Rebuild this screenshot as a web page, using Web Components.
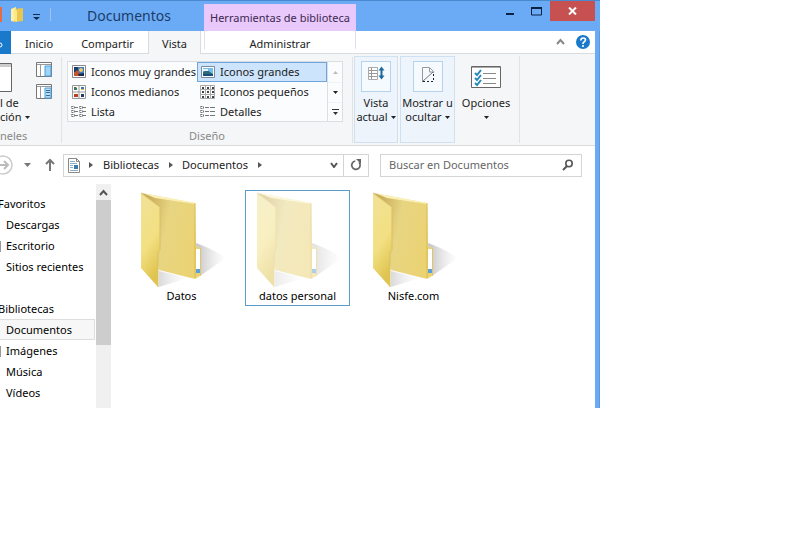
<!DOCTYPE html>
<html lang="es">
<head>
<meta charset="utf-8">
<title>Documentos</title>
<style>
body{margin:0;background:#fff;font:11px/16px "Noto Sans","Open Sans",sans-serif;color:#222;overflow-x:hidden}
main{padding-right:206px}
</style>
</head>
<body>
<main><explorer-window></explorer-window></main>
<script>
const base=`<style>
*{box-sizing:border-box}
button{font:inherit;color:inherit;background:none;border:0;padding:0;margin:0;cursor:default}
a{color:inherit;text-decoration:none}
svg{display:block;flex:none}
</style>`;
const define=(name,html)=>customElements.define(name,class extends HTMLElement{
  constructor(){super();this.attachShadow({mode:'open'}).innerHTML=base+(typeof html==='function'?html(this):html);}
});

const icons={
xl:`<svg width="16" height="16"><path d="M1.5 1.500h13v12h-13z" fill="#fff" stroke="#888"/><path d="M3 3h10v9H3z" fill="#3b7fc0"/><path d="M3 3h4v5H3z" fill="#173a6a"/><path d="M3 9l3-3 4 5 1 1H3z" fill="#c8542a"/><circle cx="10" cy="6" r="2" fill="#f3c75a"/><path d="M7 10l6-1v3H8z" fill="#182c50"/></svg>`,
lg:`<svg width="16" height="16"><path d="M1.500 2.500h13v11h-13z" fill="#fff" stroke="#7a8ba0"/><path d="M3 4h10v8H3z" fill="#79bce8"/><path d="M3 8l4-2 6 4v2H3z" fill="#2c6c78"/><path d="M3 5h5v2H3z" fill="#e3f3fb"/><path d="M3 10h10v2H3z" fill="#1b4e7d"/></svg>`,
md:`<svg width="16" height="16"><path d="M1.500 1.500h13v13h-13zM8 1v14M1 8h14" fill="#fff" stroke="#999"/><path d="M3 3h3v3H3z" fill="#377d60"/><path d="M10 3h3v3h-3z" fill="#367bb8"/><path d="M3 10h4v3H3z" fill="#b94020"/><path d="M10 10h3v3h-3z" fill="#243b68"/><path d="M5 3h1v1H5zM10 5h3v1h-3z" fill="#e9b14c"/></svg>`,
sm:`<svg width="16" height="16"><path d="M.5 1.500h14v13H.5zM5.500 1v14M10.500 1v14M0 5.500h15M0 10.500h15" fill="#fff" stroke="#aaa"/><path d="M2 3h2v2H2zM7 3h2v2H7zM12 3h2v2h-2zM2 7h2v2H2zM7 7h2v2H7zM12 7h2v2h-2zM2 12h2v2H2zM7 12h2v2H7zM12 12h2v2h-2z" fill="#444"/></svg>`,
list:`<svg width="16" height="16" fill="none" stroke="#777"><path d="M.5 2.500h3v2h-3zM.5 6.500h3v2h-3zM.5 10.500h3v2h-3zM8.500 2.500h3v2h-3zM8.500 6.500h3v2h-3zM8.500 10.500h3v2h-3z" stroke-dasharray="2 1"/><path d="M4 3.500h3M4 7.500h3M4 11.500h3M12 3.500h3M12 7.500h3M12 11.500h3"/></svg>`,
det:`<svg width="16" height="16" fill="none" stroke="#777"><path d="M.5 2.500h3v2h-3zM.5 6.500h3v2h-3zM.5 10.500h3v2h-3z" stroke-dasharray="2 1"/><path d="M5 3.500h4M5 7.500h4M5 11.500h4M10 3.500h5M10 7.500h5M10 11.500h5"/></svg>`,
current:`<svg width="28" height="28" fill="none"><path d="M6.500 4.500h9v12h-9z" fill="#fff" stroke="#aaa"/><path d="M7 7.500h8M7 10.500h8M7 13.500h8M9.500 5v11" stroke="#999"/><path d="M19.500 6v9" stroke="#1c6a9c" stroke-width="2"/><path d="M16.500 7.500l3-4 3 4zM16.500 12.500l3 4 3-4z" fill="#1c6a9c"/></svg>`,
hide:`<svg width="28" height="28" fill="none" stroke="#555"><path d="M8.500 18V4.500h7l4 4V10M15.500 5v4h4" stroke="#999"/><path d="M8 19L19 9" stroke="#777"/><path d="M19.500 11v7.500H9" stroke="#222" stroke-dasharray="2 2"/></svg>`,
opts:`<svg width="32" height="24" fill="none"><path d="M1.500 1.500h29v21h-29z" fill="#fff" stroke="#666"/><path d="M2 2h28v1H2z" fill="#aaa"/><path d="M13 8.500h13M13 13.500h13M13 18.500h13" stroke="#888"/><path d="M5 8l2 2 4-5M5 13l2 2 4-5M5 18l2 2 4-5" stroke="#2489b8" stroke-width="2"/></svg>`
};
const caret='<svg width="5" height="3"><path d="M0 0h5L2.500 3z" fill="#222"/></svg>';

define('title-bar',`<style>
:host{display:grid;grid-template-columns:54px 150px 152px 1fr auto;height:31px;background:#6babf6;border-top:1px solid #4b89cf;color:#1c3c68}
.quick{display:flex;align-items:center;padding-bottom:2px}
h1{font-size:14px;font-weight:400;line-height:29px;margin:0;text-align:center}
.context{background:#e9c8fb;margin-top:3px;line-height:27px;text-align:center;color:#3b2850}
.controls{grid-column:5;display:flex;align-items:flex-start;padding-right:5px}
.controls button{width:27px;height:21px;display:grid;place-items:center}
.controls .close{width:45px;height:20px;background:#c75050}
</style>
<div class="quick"><svg width="54" height="24" fill="none"><path d="M-3 5h4v13h-4z" fill="#f5c7a6" stroke="#e56b42" stroke-width="2"/><path d="M11 6l5-2v15l-5-1z" fill="#fff1a0"/><path d="M14 6l9-1v13l-9 1z" fill="#e8c650"/><path d="M14 5l3 3v11l-3-2z" fill="#fbe98d"/><path d="M33 11.500h7" stroke="#122c50"/><path d="M33 14h7l-3.500 3z" fill="#122c50"/><path d="M50.500 5v13" stroke="#9fc3ec"/></svg></div>
<h1>Documentos</h1><div class="context">Herramientas de biblioteca</div>
<div class="controls"><button aria-label="Minimizar"><svg width="9" height="11"><path d="M1 7h8v2H1z" fill="#0e2344"/></svg></button><button aria-label="Maximizar"><svg width="11" height="9"><path d="M.5 1h10v7H.5z" fill="none" stroke="#0e2344"/><path d="M0 0h11v2H0z" fill="#0e2344"/></svg></button><button class="close" aria-label="Cerrar"><svg width="9" height="8"><path d="M1 .5l7 7M8 .5l-7 7" stroke="#fff" stroke-width="2"/></svg></button></div>`);

define('ribbon-tabs',`<style>
:host{display:flex;height:23px;background:#fff;border-bottom:1px solid #dadbdc}
nav{display:flex}
button{line-height:21px;height:23px;padding-top:2px;text-align:center}
.file{background:#1979ca;width:11px;color:#fff;overflow:hidden}
.active{background:#f5f6f7;border:1px solid #dadbdc;border-width:0 1px}
.context{border:1px solid #e6dcec;border-width:0 1px;margin-left:3px;height:18px}
.end{margin-left:auto;display:flex;align-items:center;gap:11px;padding-right:5px}
.end button{padding:0}
</style>
<nav><button class="file" aria-label="Archivo"><svg width="4" height="18"><circle cx="0" cy="10" r="2" fill="none" stroke="#fff"/></svg></button><button style="width:56px">Inicio</button><button style="width:81px">Compartir</button><button class="active" style="width:53px">Vista</button><button class="context" style="width:152px">Administrar</button></nav>
<div class="end"><button aria-label="Contraer"><svg width="9" height="22"><path d="M1 13l3.500-4L8 13" fill="none" stroke="#888" stroke-width="2"/></svg></button><button aria-label="Ayuda"><svg width="14" height="22"><g transform="translate(0 2)"><circle cx="7" cy="9" r="7" fill="#1979ca"/><path d="M4.800 7.500Q5 5 7.200 5q2.300 0 2.300 2 0 1-1.300 1.800Q7 9.500 7 11" fill="none" stroke="#fff" stroke-width="1.700"/><circle cx="7" cy="13" r="1.100" fill="#fff"/></g></svg></button></div>`);

define('ribbon-group',`<style>
:host{display:grid;grid-template-rows:1fr 14px;border-right:1px solid #e2e3e4;margin:3px 0 2px}
footer{text-align:center;color:#888;line-height:14px}
.content{display:flex}
</style><div class="content"><slot></slot></div><footer><slot name="label"></slot></footer>`);

define('gallery-option',e=>`<style>
:host{display:block}
button{display:flex;align-items:center;gap:4px;width:100%;height:20px;line-height:16px;padding:0 0 1px 2px;text-align:left;white-space:nowrap;border:1px solid transparent}
:host([selected]) button{background:#cce4fc;border-color:#6ea5dc}
</style><button>${icons[e.getAttribute('icon')]}<slot></slot></button>`);

define('view-gallery',`<style>
:host{display:flex;background:#fbfcfd;border:1px solid #dcdfe2;width:276px;height:61px;margin:4px 9px 0 5px}
.grid{display:grid;grid-template-columns:129px 130px;grid-auto-rows:20px;flex:none}
.scroll{display:grid;grid-template-rows:repeat(3,20px);flex:1;border-left:1px solid #dcdfe2}
.scroll button{display:grid;place-items:center}
.scroll button+button{border-top:1px solid #f1f2f3}
</style><div class="grid"><gallery-option icon="xl">Iconos muy grandes</gallery-option><gallery-option icon="lg" selected>Iconos grandes</gallery-option><gallery-option icon="md">Iconos medianos</gallery-option><gallery-option icon="sm">Iconos pequeños</gallery-option><gallery-option icon="list">Lista</gallery-option><gallery-option icon="det">Detalles</gallery-option></div>
<div class="scroll"><button aria-label="Subir"><svg width="5" height="3"><path d="M0 3h5L2.500 0z" fill="#bbb"/></svg></button><button aria-label="Bajar">${caret}</button><button aria-label="Más"><svg width="7" height="7"><path d="M0 0h7v1H0zM1 3h5L3.500 6z" fill="#333"/></svg></button></div>`);

define('ribbon-button',e=>`<style>
:host{display:block}
button{display:flex;flex-direction:column;align-items:center;width:100%;height:87px;border:1px solid transparent;padding-top:4px;line-height:14px;white-space:nowrap}
:host([active]) button{background:#edf4fb;border-color:#cfe1f1}
.icon{width:32px;height:31px;display:grid;place-items:center;margin-bottom:4px}
:host([active]) .icon{width:30px;border:1px solid #b5d3ec;background:#f5faff}
.last{display:flex;align-items:center;gap:3px;min-height:14px}
</style><button><span class="icon">${icons[e.getAttribute('icon')]}</span><span><slot></slot></span><span class="last"><slot name="second"></slot>${caret}</span></button>`);

define('panes-tools',`<style>
:host{display:flex;width:61px;height:69px;justify-content:space-between;padding:0 9px 0 0}
.main{width:31px;display:flex;flex-direction:column;align-items:flex-start;line-height:14px;white-space:nowrap}
.main svg.pane{margin:6px 0 4px}
.two{display:flex;align-items:center;gap:3px}
.side{display:grid;gap:7px;padding-top:5px;align-content:start}
</style><button class="main"><svg class="pane" width="12" height="29"><path d="M-2 .500h13.500v28H-2" fill="#fff" stroke="#666"/><path d="M0 1h11v3H0z" fill="#ccc"/></svg><span>l de</span><span class="two">ción ${caret}</span></button>
<div class="side"><button aria-label="Panel de vista previa"><svg width="16" height="15"><path d="M.5 .500h15v14H.5z" fill="#fff" stroke="#777"/><path d="M1 2.500h14M4.500 3v11" stroke="#999"/><path d="M9 4h6v10H9z" fill="#9ed4fa" stroke="#4b9ed8"/></svg></button><button aria-label="Panel de detalles"><svg width="16" height="15"><path d="M.5 .500h15v14H.5z" fill="#fff" stroke="#777"/><path d="M1 2.500h14M4.500 3v11" stroke="#999"/><path d="M9 4h6v10H9z" fill="#b6defa" stroke="#4b9ed8"/><path d="M10 6.500h4M10 8.500h4M10 11.500h4" stroke="#356c9c"/></svg></button></div>`);

define('ribbon-bar',`<style>
:host{display:flex;height:92px;background:#f5f6f7;border-bottom:1px solid #dadbdc}
.views{display:flex;gap:2px;margin:2px 0 0;padding:0 4px 0 1px;border-right:1px solid #e2e3e4;height:87px}
.left{display:block;text-align:left}
</style><ribbon-group><panes-tools></panes-tools><span slot="label" class="left">neles</span></ribbon-group>
<ribbon-group><view-gallery></view-gallery><span slot="label">Diseño</span></ribbon-group>
<div class="views"><ribbon-button active icon="current" style="width:44px">Vista<span slot="second">actual</span></ribbon-button><ribbon-button active icon="hide" style="width:55px">Mostrar u<span slot="second">ocultar</span></ribbon-button><ribbon-button icon="opts" style="width:58px">Opciones</ribbon-button></div>`);

define('address-bar',`<style>
:host{display:flex;align-items:center;height:38px;padding:0 13px 0 0}
.history{display:flex;align-items:center;width:63px;flex:none}
.path{display:flex;align-items:center;flex:1;height:23px;border:1px solid #d4d4d4;padding-left:3px}
ol{display:flex;align-items:center;list-style:none;margin:0 auto 0 8px;padding:0}
li{display:flex;align-items:center;gap:9px;padding-right:9px}
.path>button{height:21px;width:25px;display:grid;place-items:center}
.path>button:last-child{border-left:1px solid #d4d4d4}
.path>button.drop{width:18px}
label{display:flex;align-items:center;width:202px;height:23px;border:1px solid #d4d4d4;margin-left:11px;padding:0 7px 0 8px}
input{font:inherit;border:0;outline:0;padding:0;flex:1;min-width:0;background:none}
input::placeholder{color:#666;opacity:1}
</style>
<div class="history"><svg width="63" height="22" fill="none"><circle cx="3" cy="11" r="9" stroke="#ccc" stroke-width="1.500"/><path d="M-2 11h9M4 7l4 4-4 4" stroke="#bbb" stroke-width="2"/><path d="M24 9h7l-3.500 4z" fill="#777"/><path d="M50 17V6M46 10l4-4 4 4" stroke="#777" stroke-width="2"/></svg></div>
<div class="path"><svg width="14" height="17" fill="none"><path d="M1.500 1.500h8l3 3v11h-11z" fill="#fff" stroke="#888"/><path d="M9.500 1.500v3h3" stroke="#888"/><path d="M3 4.500h5M3 6.500h7M3 8.500h3M3 10.500h3M3 13.500h8" stroke="#8badc8"/><path d="M7 8h4v4H7z" fill="#397bad"/></svg>
<ol><li><svg width="5" height="8"><path d="M0 1l4 3-4 3z" fill="#555"/></svg><a href="#bibliotecas">Bibliotecas</a></li><li><svg width="5" height="8"><path d="M1 1l4 3-4 3z" fill="#555"/></svg><a href="#documentos">Documentos</a></li><li><svg width="5" height="8"><path d="M1 1l4 3-4 3z" fill="#555"/></svg></li></ol>
<button class="drop" aria-label="Ubicaciones anteriores"><svg width="8" height="6"><path d="M1 1l3 4 3-4" fill="none" stroke="#555" stroke-width="2"/></svg></button><button aria-label="Actualizar"><svg width="12" height="12" fill="none"><path d="M8 2.500a4.200 4.200 0 1 1-4 0" stroke="#666" stroke-width="1.700" transform="rotate(20 6 6)"/><path d="M6 0h5v5z" fill="#666"/></svg></button></div>
<label><input type="text" placeholder="Buscar en Documentos" aria-label="Buscar en Documentos"><svg width="12" height="12" fill="none" stroke="#555"><circle cx="7" cy="4.500" r="3.200" stroke-width="1.600"/><path d="M5 7l-4 4" stroke-width="2"/></svg></label>`);

define('nav-entry',`<style>
:host{display:block}
a{display:flex;height:21px;line-height:19px;padding-left:6px;border:1px solid transparent;border-left:0;white-space:nowrap}
:host([heading]) a{padding:0;margin-left:-2px}
:host([gap]){margin-top:21px}
:host([selected]) a{background:#f7f7f7;border-color:#dedede}
:host([mark]) a{background:linear-gradient(#999,#999) 0 5px/1px 11px no-repeat}
</style><a href="#"><slot></slot></a>`);

define('nav-pane',`<style>
:host{display:flex;overflow:hidden}
nav{width:96px;padding:9px 1px 5px 0}
.bar{width:15px;background:#f0f0f0}
.bar button{display:grid;place-items:center;height:16px;width:15px}
.thumb{height:145px;background:#cdcdcd}
</style><nav><nav-entry heading>Favoritos</nav-entry><nav-entry>Descargas</nav-entry><nav-entry mark>Escritorio</nav-entry><nav-entry>Sitios recientes</nav-entry><nav-entry heading gap>Bibliotecas</nav-entry><nav-entry selected>Documentos</nav-entry><nav-entry mark>Imágenes</nav-entry><nav-entry>Música</nav-entry><nav-entry>Vídeos</nav-entry></nav>
<div class="bar"><button aria-label="Subir"><svg width="9" height="7"><path d="M1 6l3.500-4L8 6" fill="none" stroke="#555" stroke-width="2"/></svg></button><div class="thumb"></div></div>`);

define('folder-item',`<style>
:host{display:block;width:105px}
button{display:block;width:100%;height:116px;border:1px solid transparent;text-align:center;white-space:nowrap}
:host([selected]) button{border-color:#5c9cc8}
:host([faded]) svg{opacity:.5}
</style><button><svg width="103" height="96" viewBox="1 2 103 96"><defs>
<linearGradient id="f" x1="0" y1="0" x2=".3" y2="1"><stop stop-color="#f0e197"/><stop offset=".6" stop-color="#f3e083"/><stop offset="1" stop-color="#dfc450"/></linearGradient>
<linearGradient id="b" x1="0" y1="0" x2="1" y2=".3"><stop offset=".15" stop-color="#c9ae5c"/><stop offset=".5" stop-color="#e8d582"/><stop offset="1" stop-color="#ebd374"/></linearGradient>
<linearGradient id="s"><stop stop-color="#999" stop-opacity=".6"/><stop offset="1" stop-color="#ccc" stop-opacity="0"/></linearGradient></defs>
<path d="M67 53Q82 58 97 68L84 77 71 86z" fill="url(#s)"/><path d="M30 81l29 7-29 9z" fill="url(#s)" opacity=".6"/>
<path d="M12 3l54 10 1 43 4 2v28l-5 3-36-9z" fill="url(#b)"/><path d="M14 3l52 10v1L26 8z" fill="#faf0b8"/><path d="M66 13v75" stroke="#d9ba50"/>
<path d="M67 59h4v23h-4z" fill="#fff"/><path d="M67 79h4v4h-4z" fill="#5b9fd8"/><path d="M71.500 58v28" stroke="#dfc66a"/>
<path d="M12 3l19 14v43l-2 2v35L12 78z" fill="url(#f)"/><path d="M12 3l19 14v43l-2 2v35" fill="none" stroke="#d9c067"/></svg><slot></slot></button>`);

define('explorer-window',`<style>
:host{display:block;background:#6babf6;overflow:hidden;box-shadow:inset -1px 0 #5b97e2}
.body{background:#fff;margin-right:5px}
.content{display:grid;grid-template-columns:111px 1fr}
.files{display:flex;flex-wrap:wrap;align-content:flex-start;gap:11px;padding:6px 18px;color:#000}
nav-pane{color:#000}
</style><title-bar></title-bar><div class="body"><ribbon-tabs></ribbon-tabs><ribbon-bar></ribbon-bar><address-bar></address-bar><div class="content"><nav-pane></nav-pane><div class="files"><folder-item>Datos</folder-item><folder-item selected faded>datos personal</folder-item><folder-item>Nisfe.com</folder-item></div></div></div>`);
</script>
</body>
</html>
